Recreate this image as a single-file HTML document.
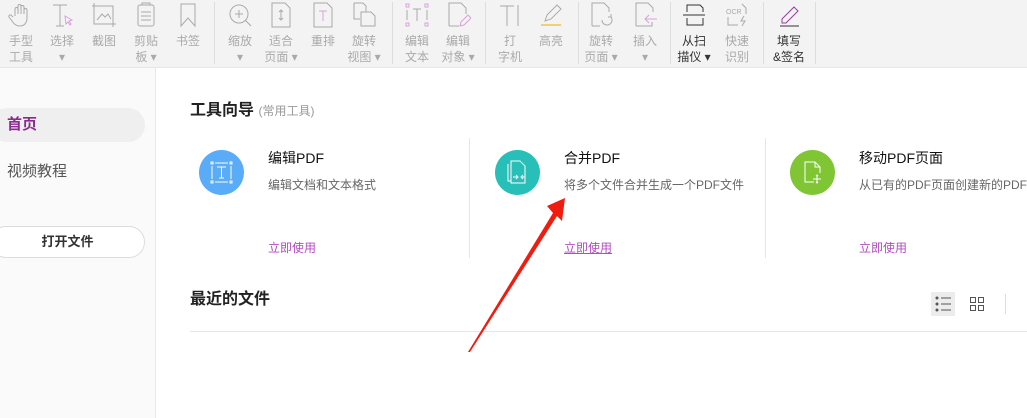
<!DOCTYPE html>
<html><head><meta charset="utf-8"><style>
*{margin:0;padding:0;box-sizing:border-box}
body{width:1027px;height:418px;overflow:hidden;background:#fff;font-family:"Liberation Sans","Noto Sans CJK SC",sans-serif;position:relative}
#tb{position:absolute;left:0;top:0;width:1027px;height:68px;background:#f3f3f3;border-bottom:1px solid #e6e6e6}
.it{position:absolute;top:0;width:42px;text-align:center;font-size:12px;line-height:16px;color:#aaa}
.it svg{display:block;margin:2px auto 0;width:26px;height:26px}
.it .l{margin-top:5px}
.dk{color:#333}
.sep{position:absolute;top:2px;width:1px;height:62px;background:#ddd}
#side{position:absolute;left:0;top:68px;width:156px;height:350px;background:#fafafa;border-right:1px solid #e8e8e8}
.home{position:absolute;left:-10px;top:40px;width:155px;height:34px;background:#efefef;border-radius:17px;color:#8a2b8f;font-size:15px;font-weight:bold;line-height:34px;padding-left:17px}
.vid{position:absolute;left:7px;top:92px;font-size:15px;color:#555}
.open{position:absolute;left:-10px;top:158px;width:155px;height:32px;border:1px solid #ddd;border-radius:16px;background:#fff;text-align:center;line-height:30px;font-size:13px;font-weight:bold;color:#333}
.h{position:absolute;font-size:16px;font-weight:bold;color:#222}
.card{position:absolute;top:138px;height:120px}
.ic{position:absolute;left:0;top:12px;width:45px;height:45px;border-radius:50%}
.ct{position:absolute;left:69px;top:10px;font-size:14px;color:#111;white-space:nowrap}
.cd{position:absolute;left:69px;top:38px;font-size:12px;color:#666;white-space:nowrap}
.cu{position:absolute;left:69px;top:101px;font-size:12px;color:#b24cc0;white-space:nowrap}
.vs{position:absolute;top:138px;width:1px;height:120px;background:#e6e6e6}
</style></head><body>
<div id="tb">
<div class="it" style="left:0"><svg viewBox="0 0 26 26" fill="none" stroke="#aaa"><path d="M7 14V7a1.5 1.5 0 013 0v5V4a1.5 1.5 0 013 0v8V5a1.5 1.5 0 013 0v7V8a1.5 1.5 0 013 0v8c0 5-3 8-7 8s-6-2-8-5l-3-4a1.5 1.5 0 012-2l2 2"/></svg><div class="l">手型<br>工具</div></div>
<div class="it" style="left:41px"><svg viewBox="0 0 26 26" fill="none" stroke="#aaa"><path d="M4 3h14M11 3v21M7 24h8"/><path d="M16 14l7 4-3 1 2 3-1 1-2-3-2 2z" stroke="#d9a0dc"/></svg><div class="l">选择<br>▾</div></div>
<div class="it" style="left:83px"><svg viewBox="0 0 26 26" fill="none" stroke="#aaa"><path d="M3 1v21h22M1 4h21v21"/><path d="M6 18l5-6 3 3 3-3 3 5"/></svg><div class="l">截图</div></div>
<div class="it" style="left:125px"><svg viewBox="0 0 26 26" fill="none" stroke="#aaa"><rect x="5" y="3" width="16" height="21" rx="2"/><path d="M9 3V1h8v2M8 10h10M8 14h10M8 18h10"/></svg><div class="l">剪贴<br>板 ▾</div></div>
<div class="it" style="left:167px"><svg viewBox="0 0 26 26" fill="none" stroke="#aaa"><path d="M6 2h14v22l-7-8-7 8z"/></svg><div class="l">书签</div></div>
<div class="sep" style="left:214px"></div>
<div class="it" style="left:219px"><svg viewBox="0 0 26 26" fill="none" stroke="#aaa"><circle cx="12" cy="12" r="9"/><path d="M12 8v8M8 12h8M18 18l6 6"/></svg><div class="l">缩放<br>▾</div></div>
<div class="it" style="left:260px"><svg viewBox="0 0 26 26" fill="none" stroke="#aaa"><path d="M4 1h13l5 5v19H4z"/><path d="M13 8v10M11 10l2-2 2 2M11 16l2 2 2-2"/></svg><div class="l">适合<br>页面 ▾</div></div>
<div class="it" style="left:302px"><svg viewBox="0 0 26 26" fill="none" stroke="#aaa"><path d="M4 1h13l5 5v19H4z"/><path d="M9 9h8M13 9v10" stroke="#d9a0dc"/></svg><div class="l">重排</div></div>
<div class="it" style="left:343px"><svg viewBox="0 0 26 26" fill="none" stroke="#aaa"><path d="M3 1h9l3 3v6M3 1v16h6"/><path d="M10 10h10l4 4v10H10z"/></svg><div class="l">旋转<br>视图 ▾</div></div>
<div class="sep" style="left:392px"></div>
<div class="it" style="left:396px"><svg viewBox="0 0 26 26" fill="none" stroke="#d9a0dc"><rect x="2" y="2" width="3" height="3"/><rect x="21" y="2" width="3" height="3"/><rect x="2" y="21" width="3" height="3"/><rect x="21" y="21" width="3" height="3"/><path d="M3 8v10M23 8v10M9 7h8M13 7v12" stroke="#aaa"/></svg><div class="l">编辑<br>文本</div></div>
<div class="it" style="left:437px"><svg viewBox="0 0 26 26" fill="none" stroke="#aaa"><path d="M4 24V1h12l5 5v6M4 24h10"/><path d="M15 24l1-4 7-7 3 3-7 7z" stroke="#d9a0dc"/></svg><div class="l">编辑<br>对象 ▾</div></div>
<div class="sep" style="left:485px"></div>
<div class="it" style="left:489px"><svg viewBox="0 0 26 26" fill="none" stroke="#aaa"><path d="M3 4h14M10 4v20M21 3v21"/></svg><div class="l">打<br>字机</div></div>
<div class="it" style="left:530px"><svg viewBox="0 0 26 26" fill="none" stroke="#aaa"><path d="M7 19l2-6 10-10 4 4-10 10z"/><path d="M3 23h20" stroke="#f0d070" stroke-width="2"/></svg><div class="l">高亮</div></div>
<div class="sep" style="left:578px"></div>
<div class="it" style="left:580px"><svg viewBox="0 0 26 26" fill="none" stroke="#aaa"><path d="M4 24V1h12l5 5v4M4 24h8"/><path d="M14 18a5 5 0 109-3M23 12v3h-3"/></svg><div class="l">旋转<br>页面 ▾</div></div>
<div class="it" style="left:624px"><svg viewBox="0 0 26 26" fill="none" stroke="#aaa"><path d="M4 24V1h12l5 5v4M4 24h16v-4"/><path d="M25 17H13M17 13l-4 4 4 4" stroke="#d9a0dc"/></svg><div class="l">插入<br>▾</div></div>
<div class="sep" style="left:670px"></div>
<div class="it dk" style="left:673px"><svg viewBox="0 0 26 26" fill="none" stroke="#333"><path d="M6 10V3h13l3 3v4M2 13h22M6 16v7h16v-7"/></svg><div class="l">从扫<br>描仪 ▾</div></div>
<div class="it" style="left:716px"><svg viewBox="0 0 26 26" fill="none" stroke="#aaa"><text x="2" y="12" font-size="7" fill="#aaa" stroke="none" font-family="Liberation Sans">OCR</text><path d="M4 15v8h10M18 2l4 4v6"/><path d="M20 14l-3 5h4l-3 5" /></svg><div class="l">快速<br>识别</div></div>
<div class="sep" style="left:763px"></div>
<div class="it dk" style="left:768px"><svg viewBox="0 0 26 26" fill="none" stroke="#9a3aa0"><path d="M6 17l12-12 4 4-12 12H6z"/><path d="M4 24h19" stroke="#333"/></svg><div class="l">填写<br>&amp;签名</div></div>
<div class="sep" style="left:815px"></div>
</div>
<div id="side"><div class="home">首页</div><div class="vid">视频教程</div><div class="open">打开文件</div></div>
<div class="h" style="left:190px;top:96px">工具向导 <span style="font-size:12px;font-weight:normal;color:#999">(常用工具)</span></div>
<div class="card" style="left:199px"><div class="ic" style="background:#5aabf8"><svg width="45" height="45" viewBox="0 0 45 45" fill="none" stroke="#fff"><rect x="12" y="12" width="2" height="2"/><rect x="31" y="12" width="2" height="2"/><rect x="12" y="31" width="2" height="2"/><rect x="31" y="31" width="2" height="2"/><path d="M13 16v13M32 16v13M16 13h13M16 32h13M18 17h9M22.5 17v11M20 28h5"/></svg></div><div class="ct">编辑PDF</div><div class="cd">编辑文档和文本格式</div><div class="cu">立即使用</div></div>
<div class="vs" style="left:469px"></div>
<div class="card" style="left:495px"><div class="ic" style="background:#28bfb8"><svg width="45" height="45" viewBox="0 0 45 45" fill="none" stroke="#fff"><path d="M13 14v17h3"/><path d="M16 11h9l5 5v17H16z"/><path d="M18 27h5M21 25l2 2-2 2M30 27h-4M28 25l-2 2 2 2"/></svg></div><div class="ct">合并PDF</div><div class="cd">将多个文件合并生成一个PDF文件</div><div class="cu" style="text-decoration:underline">立即使用</div></div>
<div class="vs" style="left:765px"></div>
<div class="card" style="left:790px"><div class="ic" style="background:#80c534"><svg width="45" height="45" viewBox="0 0 45 45" fill="none" stroke="#fff"><path d="M24 32h-9V12h10l5 5v6M25 12v5h5"/><path d="M27 25v8M23 29h8M26 26l1-1 1 1M26 32l1 1 1-1"/></svg></div><div class="ct">移动PDF页面</div><div class="cd">从已有的PDF页面创建新的PDF</div><div class="cu">立即使用</div></div>
<div class="h" style="left:190px;top:285px">最近的文件</div>
<div style="position:absolute;left:931px;top:292px;width:24px;height:24px;background:#ececec"></div>
<svg style="position:absolute;left:931px;top:292px" width="90" height="24" fill="none" stroke="#555"><circle cx="6" cy="6" r="1" fill="#555"/><circle cx="6" cy="12" r="1" fill="#555"/><circle cx="6" cy="18" r="1" fill="#555"/><path d="M10 6h10M10 12h10M10 18h10"/><rect x="39.5" y="5.5" width="5" height="5"/><rect x="47.5" y="5.5" width="5" height="5"/><rect x="39.5" y="13.5" width="5" height="5"/><rect x="47.5" y="13.5" width="5" height="5"/><path d="M74.5 2v20" stroke="#ddd"/></svg>
<div style="position:absolute;left:190px;top:331px;width:837px;height:1px;background:#e6e6e6"></div>
<svg style="position:absolute;left:0;top:0" width="1027" height="418"><polygon points="468,352 553,213 547,206 565,198 562,221 557,216 470,352" fill="#f01c10"/></svg>
</body></html>
